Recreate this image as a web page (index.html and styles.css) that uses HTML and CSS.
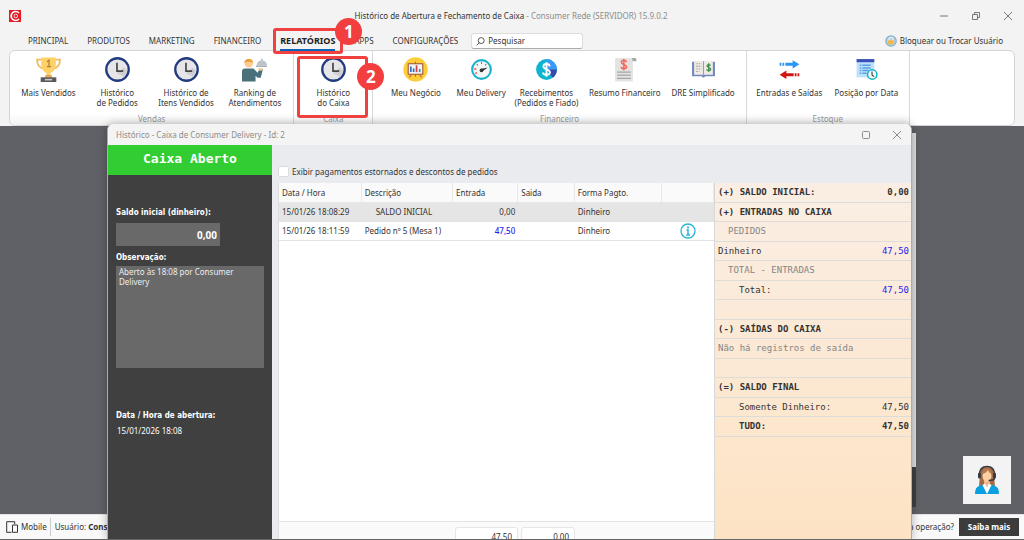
FILE: index.html
```html
<!DOCTYPE html>
<html lang="pt-BR">
<head>
<meta charset="utf-8">
<meta name="viewport" content="width=device-width, initial-scale=1">
<title>Histórico de Abertura e Fechamento de Caixa - Consumer Rede</title>
<link rel="stylesheet" href="styles.css">
</head>
<body>
<svg class="defs" aria-hidden="true">
  <symbol id="clock" viewBox="0 0 24 24">
    <circle cx="12" cy="12" r="10.8" fill="#e6e6e8" stroke="#213a80" stroke-width="2.2"/>
    <path d="M11.5 15.5 18 19a9 9 0 0 0 3-6l-3-3z" fill="#cfcfd3"/>
    <path d="M11.5 5.5v8h6" fill="none" stroke="#444" stroke-width="1.6"/>
  </symbol>
  <symbol id="close" viewBox="0 0 10 10"><path d="M1 1l8 8M9 1L1 9" fill="none" stroke="currentColor"/></symbol>
</svg>
<div class="app">
  <header class="titlebar">
    <svg class="logo" viewBox="0 0 12 12"><rect width="12" height="12" fill="#e31b23"/><path d="M10 3A4.500 4.500 0 1 0 10 9" fill="none" stroke="#fff" stroke-width="1.700"/><circle cx="6.800" cy="6" r="1.800" fill="none" stroke="#fff" stroke-width=".8"/></svg>
    <h1 class="title">Histórico de Abertura e Fechamento de Caixa <span class="muted">- Consumer Rede (SERVIDOR) 15.9.0.2</span></h1>
    <div class="winbtns">
      <button aria-label="Minimizar"><svg viewBox="0 0 10 10"><path d="M1 5h8" stroke="currentColor"/></svg></button>
      <button aria-label="Restaurar"><svg viewBox="0 0 10 10"><path d="M1.500 3.500h5v5h-5zM3.500 3V1.500h5v5H7" fill="none" stroke="currentColor"/></svg></button>
      <button aria-label="Fechar"><svg><use href="#close"/></svg></button>
    </div>
  </header>

  <nav class="menu">
    <a href="#">PRINCIPAL</a>
    <a href="#">PRODUTOS</a>
    <a href="#">MARKETING</a>
    <a href="#">FINANCEIRO</a>
    <a href="#" class="active">RELATÓRIOS<span class="mark mark-tab"><b class="badge">1</b></span></a>
    <a href="#">APPS</a>
    <a href="#">CONFIGURAÇÕES</a>
    <label class="search"><svg viewBox="0 0 10 10"><circle cx="5.800" cy="4" r="3.300" fill="none" stroke="#444"/><path d="M3.500 6.500L.7 9.300" stroke="#444"/></svg><input type="text" placeholder="Pesquisar" aria-label="Pesquisar"></label>
    <button class="lock"><svg viewBox="0 0 12 12"><circle cx="6" cy="6" r="5.800" fill="#7fb0cc"/><circle cx="6" cy="6" r="4.600" fill="#b9d2de"/><path d="M4 6V4.300a2 2 0 0 1 4 0V6" fill="none" stroke="#e8eef0" stroke-width="1.200"/><rect x="3" y="5.200" width="6" height="4.200" rx=".8" fill="#f2b84b"/></svg>Bloquear ou Trocar Usuário</button>
  </nav>

  <section class="ribbon">
    <div class="group">
      <div class="items">
        <button><svg viewBox="0 0 24 24"><path d="M5.500 2.500H1c0 5 2.500 8 6 8.500M18.500 2.500H23c0 5-2.500 8-6 8.500" fill="none" stroke="#f0bd62" stroke-width="1.800"/><path d="M5 .5h14v6c0 5-2 8-5.500 9l1 4h-5l1-4C7 14.500 5 11.500 5 6.500z" fill="#ffd166"/><path d="M10.500 4.500 12.500 3v6M10.500 9.200h4" fill="none" stroke="#b07f40" stroke-width="1.200"/><path d="M9.500 17h5l1.500 3H8z" fill="#e4a950"/><rect x="4.500" y="19.500" width="15" height="4.500" fill="#5a5a5c"/><rect x="8.500" y="21" width="7" height="1.500" fill="#c9c9c9"/></svg>Mais Vendidos</button>
        <button><svg><use href="#clock"/></svg>Histórico<br>de Pedidos</button>
        <button><svg><use href="#clock"/></svg>Histórico de<br>Itens Vendidos</button>
        <button><svg viewBox="0 0 24 24"><path d="M0 23.500V14q0-3 3-3h8l4 4 2-4 3 1-2 8h-3l-2-2v5.500z" fill="#48717c"/><circle cx="6.500" cy="6" r="4" fill="#ffc98f"/><path d="M2.300 6C2 .5 11 .5 10.700 6L9 4.500H4z" fill="#f09a34"/><path d="M14 8a5 5 0 0 1 10 0z" fill="#b9c3c9"/><path d="M13.500 8.800h11" stroke="#8e9aa1" stroke-width="1.200"/><circle cx="19" cy="2.500" r="1" fill="#b9c3c9"/><path d="M16 10.500h3.500v2.500h-3.500z" fill="#ffc98f"/></svg>Ranking de<br>Atendimentos</button>
      </div>
      <span class="caption">Vendas</span>
    </div>
    <div class="group">
      <div class="items">
        <button><svg><use href="#clock"/></svg>Histórico<br>do Caixa</button>
      </div>
      <span class="caption">Caixa</span>
      <span class="mark mark-group"><b class="badge">2</b></span>
    </div>
    <div class="group g-financeiro">
      <div class="items">
        <button><svg viewBox="0 0 24 24"><circle cx="12" cy="12" r="11.700" fill="#ffcc3a"/><path d="M5 6.500h14v10H5z" fill="#eef4fa" stroke="#a0522f" stroke-width="1"/><path d="M12 4.500v2M8 17l-2 2.500M16 17l2 2.500M12 17v2" stroke="#b0622f" stroke-width="1"/><path d="M7.500 9v5.500M10.200 11v3.500" stroke="#2d6fc0" stroke-width="1.600"/><path d="M13 8v6.500" stroke="#d83b3b" stroke-width="1.600"/><path d="M16 11.500v3" stroke="#1ba0b8" stroke-width="1.600"/></svg>Meu Negócio</button>
        <button><svg viewBox="0 0 24 24"><circle cx="12" cy="12" r="9" fill="#f3f5f6" stroke="#16b2cc" stroke-width="2"/><path d="M12 5v1.500M7.500 7l.8 1M16.500 7l-.8 1" stroke="#555"/><path d="M5 11.500h2M6 16l1.500-1" stroke="#ef4d4d" stroke-width="1.300"/><path d="M11 11.500l7-1.500-6 4.500z" fill="#333"/><circle cx="12" cy="12.800" r="1.800" fill="#333"/></svg>Meu Delivery</button>
        <button><svg viewBox="0 0 24 24"><circle cx="12" cy="12" r="10" fill="#0fb5cf"/><path d="M12 12V2a10 10 0 0 1 10 10z" fill="#3e97fb"/><path d="M12 12h10a10 10 0 0 1-4 8z" fill="#3949ab"/><path d="M15 9c0-3.200-6-3.200-6 0s6.300 2.600 6.300 5.800-6.600 3-6.600 0M12 5v14" fill="none" stroke="#fff" stroke-width="1.800"/></svg>Recebimentos<br>(Pedidos e Fiado)</button>
        <button><svg viewBox="0 0 24 24"><path d="M3 1h17v22.500H3z" fill="#e4e3e2"/><path d="M19 1h3q1.500 0 1.500 3H20z" fill="#a6a6a6"/><path d="M13.700 5c0-2.600-4.700-2.600-4.700 0s5 2 5 4.400-5.200 2.500-5.200 0M11.400 1.800v11" fill="none" stroke="#f2695f" stroke-width="1.500"/><path d="M5 14.500h13M5 17.500h13M5 20.500h13" stroke="#a5a5a5" stroke-width="1.200"/></svg>Resumo Financeiro</button>
        <button><svg viewBox="0 0 24 24"><path d="M1 4.500h22v14H14l-2 1.500-2-1.500H1z" fill="#7388bd"/><path d="M3 3.500H11.500v13.500H3zM12.500 3.500h8.500v13.500h-8.500z" fill="#eeebe6"/><path d="M12 4v14" stroke="#a29ba0"/><path d="M5 6.500h5M5 9h5M5 11.500h5M5 14h3" stroke="#b2a39c" stroke-dasharray="1.500 .8"/><path d="M18.700 8.500c0-1.600-3.300-1.600-3.300 0s3.500 1.500 3.500 3.200-3.700 1.800-3.700 0M17 6v8.500" fill="none" stroke="#3c8a49" stroke-width="1.200"/></svg>DRE Simplificado</button>
      </div>
      <span class="caption">Financeiro</span>
    </div>
    <div class="group">
      <div class="items">
        <button><svg viewBox="0 0 24 24"><path d="M8 5.500h7V3l6.500 4-6.500 4V8.500H8z" fill="#2f95f3"/><path d="M2.500 7h5" stroke="#2f95f3" stroke-width="3" stroke-dasharray="1.700 1"/><path d="M16 15.500H9V13l-6.500 4L9 21v-2.500h7z" fill="#d01414"/><path d="M17 17h5" stroke="#d01414" stroke-width="3" stroke-dasharray="1.700 1"/></svg>Entradas e Saídas</button>
        <button><svg viewBox="0 0 24 24"><path d="M2.500 2h17v17.500h-17z" fill="#bde0fb"/><path d="M2.500 2h17v3h-17z" fill="#3a50b4"/><path d="M5.500 8h1.500M5.500 10.500h1.500M5.500 13h1.500M5.500 15.500h1.500M8 8h8M8 10.500h8M8 13h6M8 15.500h4" stroke="#5a9fe0" stroke-width="1.400"/><circle cx="17.500" cy="16.800" r="4.500" fill="#f4f9fa" stroke="#14b4cb" stroke-width="1.500"/><path d="M17.300 14v3.300l2 1.500" fill="none" stroke="#333"/></svg>Posição por Data</button>
      </div>
      <span class="caption">Estoque</span>
    </div>
  </section>

  <main class="workspace">
    <button class="support" aria-label="Suporte"><svg viewBox="0 0 26 30"><path d="M6 9Q6 2 13 2t7 7l1 13H5z" fill="#a56a45"/><path d="M10 15h6v6h-6z" fill="#eeb583"/><ellipse cx="13" cy="11" rx="4.500" ry="6" fill="#fcd0a0"/><path d="M8 9q4-.5 6-4 1 3 4 4-1-6-5-6t-5 6z" fill="#b87950"/><path d="M1 29q0-7 4-8l5-2 3 7 3-7 5 2q4 1 4 8z" fill="#0aa0e0"/><path d="M8.500 20l4.500 9 4.500-9-2.500-1.500L13 22l-2-3.500z" fill="#fff"/><path d="M5.500 10Q5.500 1.500 13 1.500T20.500 10" fill="none" stroke="#3a3a42" stroke-width="1.600"/><rect x="4" y="7.500" width="3" height="6" rx="1.500" fill="#3a3a42"/><rect x="19" y="7.500" width="3" height="6" rx="1.500" fill="#3a3a42"/><path d="M20.500 13q0 2.500-6 2.500" fill="none" stroke="#3a3a42" stroke-width="1.600"/></svg></button>
  </main>

  <footer class="status">
    <svg class="mobile" viewBox="0 0 12 12"><path d="M5.500 11.300H.7V.7h8v2.500M6.500 4h5v7.300h-5z" fill="none" stroke="#333"/></svg>
    <span>Mobile</span>
    <span class="user">Usuário: <b>Consumer</b></span>
    <span class="ask">a operação?</span>
    <button class="more">Saiba mais</button>
  </footer>

  <div class="backwin"><i></i></div>

  <section class="dialog" role="dialog" aria-label="Histórico de caixa">
    <header class="dlg-title">
      <h2>Histórico - Caixa de Consumer Delivery - Id: 2</h2>
      <button aria-label="Maximizar"><svg viewBox="0 0 10 10"><rect x="1.500" y="1.500" width="7" height="7" rx="1" fill="none" stroke="currentColor"/></svg></button>
      <button aria-label="Fechar"><svg><use href="#close"/></svg></button>
    </header>
    <div class="dlg-body">
      <aside class="side">
        <h3>Caixa Aberto</h3>
        <div class="fields">
          <label for="saldo">Saldo inicial (dinheiro):</label>
          <input id="saldo" type="text" value="0,00" readonly>
          <label for="obs">Observação:</label>
          <textarea id="obs" readonly>Aberto às 18:08 por Consumer Delivery</textarea>
          <strong>Data / Hora de abertura:</strong>
          <span class="when">15/01/2026 18:08</span>
        </div>
      </aside>
      <div class="content">
        <label class="check"><input type="checkbox">Exibir pagamentos estornados e descontos de pedidos</label>
        <div class="panes">
          <div class="grid">
            <table>
              <colgroup><col class="c1"><col class="c2"><col class="c3"><col class="c4"><col class="c5"><col class="c6"></colgroup>
              <thead><tr><th>Data / Hora</th><th>Descrição</th><th>Entrada</th><th>Saida</th><th>Forma Pagto.</th><th></th></tr></thead>
              <tbody>
                <tr class="sel"><td>15/01/26 18:08:29</td><td class="ind">SALDO INICIAL</td><td class="num">0,00</td><td></td><td>Dinheiro</td><td></td></tr>
                <tr><td>15/01/26 18:11:59</td><td>Pedido nº 5 (Mesa 1)</td><td class="num blue">47,50</td><td></td><td>Dinheiro</td><td class="act"><button aria-label="Informações"><svg viewBox="0 0 16 16"><circle cx="8" cy="8" r="7" fill="#fff" stroke="#27b3d6" stroke-width="1.300"/><circle cx="8" cy="4.500" r="1.100" fill="#27b3d6"/><path d="M6.500 7H8v5M6.300 12h3.600" fill="none" stroke="#27b3d6" stroke-width="1.500"/></svg></button></td></tr>
              </tbody>
            </table>
            <div class="totals"><output>47,50</output><output>0,00</output></div>
          </div>
          <div class="summary">
            <table>
              <tr class="b"><td>(+) SALDO INICIAL:</td><td>0,00</td></tr>
              <tr class="b"><td>(+) ENTRADAS NO CAIXA</td><td></td></tr>
              <tr class="g"><td class="i1">PEDIDOS</td><td></td></tr>
              <tr><td>Dinheiro</td><td class="blue">47,50</td></tr>
              <tr class="g"><td class="i1">TOTAL - ENTRADAS</td><td></td></tr>
              <tr><td class="i2">Total:</td><td class="blue">47,50</td></tr>
              <tr><td></td><td></td></tr>
              <tr class="b"><td>(-) SAÍDAS DO CAIXA</td><td></td></tr>
              <tr class="g"><td>Não há registros de saída</td><td></td></tr>
              <tr><td></td><td></td></tr>
              <tr class="b"><td>(=) SALDO FINAL</td><td></td></tr>
              <tr><td class="i2">Somente Dinheiro:</td><td>47,50</td></tr>
              <tr class="b"><td class="i2">TUDO:</td><td>47,50</td></tr>
            </table>
          </div>
        </div>
      </div>
    </div>
  </section>
</div>
</body>
</html>
```
FILE: styles.css
```css
* { box-sizing: border-box; }
body { margin: 0; font: 8px/10px "Noto Sans", "Open Sans", sans-serif; color: #333; }
button, input, textarea { font: inherit; color: inherit; margin: 0; padding: 0; border: 0; background: none; }
a { color: inherit; text-decoration: none; }
h1, h2, h3 { margin: 0; font-size: inherit; font-weight: 400; }
svg { display: block; }
.defs { position: absolute; width: 0; height: 0; }

.app { position: relative; display: flex; flex-direction: column; height: 100vh; overflow: hidden; background: #f3f3f3; border-bottom: 1px solid #666; }

.titlebar { display: grid; grid-template-columns: 1fr auto 1fr; align-items: center; height: 32px; padding: 0 11px 0 9px; flex: none; }
.logo { width: 12px; height: 12px; }
.muted { color: #8c8c8c; }
.winbtns { display: flex; justify-content: flex-end; gap: 22px; color: #777; }
.winbtns svg, .dlg-title svg { width: 10px; height: 10px; }

.menu { display: flex; align-items: center; height: 18px; padding: 0 21px 0 28px; gap: 19px; flex: none; white-space: nowrap; }
.menu .active { position: relative; font-weight: 700; font-size: 9px; color: #222; box-shadow: 0 3px #f3f3f3, 0 5px #0c62b8; }
.search { display: flex; align-items: center; gap: 3px; width: 112px; height: 16px; margin-left: -6px; padding: 0 4px; background: #fff; border: 1px solid #ddd; border-bottom-color: #aaa; border-radius: 3px; }
.search svg { width: 9px; height: 9px; flex: none; }
.search input { width: 100%; outline: 0; }
.search input::placeholder { color: #333; opacity: 1; }
.lock { display: flex; align-items: center; gap: 3px; margin-left: auto; }
.lock svg { width: 12px; height: 12px; }

.mark { position: absolute; z-index: 3; border: 3px solid #f04141; border-radius: 3px; pointer-events: none; }
.mark-tab { inset: -8px -8px -8px -7px; }
.mark-group { inset: 5px 4px 7px 3px; }
.badge { position: absolute; display: grid; place-items: center; width: 27px; height: 27px; border-radius: 50%; background: #f23e3e; color: #fff; font: 700 17px/20px "Noto Sans", sans-serif; }
.mark-tab .badge { right: -22px; top: -13px; }
.mark-group .badge { right: -19px; top: 4px; }

.ribbon { display: grid; grid-template-columns: 284fr 79fr 373fr 163fr 104fr; height: 76px; margin: 0 9px; background: #fff; border: 1px solid #d4d4d4; border-radius: 6px; flex: none; }
.group { position: relative; display: flex; flex-direction: column; justify-content: space-between; border-right: 1px solid #d8d8d8; padding: 6px 4px 1px; min-width: 0; background: linear-gradient(#fff 85%, #f2f2f2); }
.group:first-child { border-radius: 6px 0 0 6px; }
.g-financeiro { padding: 6px 10px 1px; }
.items { display: flex; }
.items button { flex: 65 1 0; min-width: 0; display: flex; flex-direction: column; align-items: center; white-space: nowrap; }
.g-financeiro button:nth-child(4) { flex-grow: 91; }
.items svg { width: 25px; height: 25px; margin-bottom: 6px; }
.caption { text-align: center; color: #999; }

.workspace { flex: 1; display: flex; align-items: flex-end; justify-content: flex-end; padding: 0 13px 10px; background: #606166; min-height: 0; }
.support { display: grid; place-items: center; width: 48px; height: 48px; background: #f3f3f3; }
.support svg { width: 26px; height: 30px; }

.status { display: flex; align-items: center; height: 25px; padding: 0 5px 0 6px; background: #f9f9f9; border-top: 1px solid #e4e4e4; flex: none; }
.mobile { width: 12px; height: 12px; margin-right: 3px; }
.user { margin-left: 3px; padding: 4px 0 4px 4px; border-left: 1px solid #ccc; }
.ask { margin-left: auto; }
.more { margin-left: 5px; width: 60px; height: 18px; background: #3c3c3c; color: #fff; font-weight: 700; }

.backwin { position: absolute; left: 107px; right: 108px; top: 133px; bottom: 32px; display: flex; align-items: flex-end; background: #dcdfe0; }
.backwin i { width: 100%; height: 40px; background: #404040; }

.dialog { position: absolute; left: 107px; right: 112px; top: 124px; bottom: 0; display: flex; flex-direction: column; background: #eaebef; border: 1px solid #aaacad; border-width: 0 1px; border-radius: 6px 6px 0 0; overflow: hidden; box-shadow: 0 0 10px rgba(0,0,0,.3); }
.dlg-title { display: flex; align-items: center; gap: 21px; height: 21px; padding: 0 9px 0 8px; background: #f4f4f4; color: #8c8c8c; flex: none; }
.dlg-title h2 { flex: 1; }
.dlg-body { flex: 1; display: flex; min-height: 0; }
.side { width: 164px; flex: none; background: #404040; color: #fff; }
.side h3 { height: 30px; padding-top: 6px; background: #32cd32; text-align: center; font: 700 13px/16px "DejaVu Sans Mono", monospace; }
.fields { display: flex; flex-direction: column; align-items: flex-start; padding: 33px 8px 0; }
.fields label, .fields strong { font: 700 8px/10px "DejaVu Sans Condensed", "DejaVu Sans", sans-serif; }
.fields input { width: 104px; height: 23px; margin: 5px 0 7px; padding: 0 3px; background: #696969; text-align: right; font-size: 10px; font-weight: 700; }
.fields textarea { align-self: stretch; height: 102px; margin: 3px 0 43px; padding: 1px 3px; background: #696969; border: 0; resize: none; overflow: hidden; color: #eee; }
.when { margin: 5px 1px; }

.content { flex: 1; min-width: 0; display: flex; flex-direction: column; padding: 21px 0 0 6px; }
.check { display: flex; align-items: center; gap: 3px; height: 11px; margin-bottom: 6px; }
.check input { appearance: none; width: 11px; height: 11px; background: #fff; border: 1px solid #dcdcdc; border-radius: 2px; }
.panes { flex: 1; display: flex; min-height: 0; }
.grid { flex: 1; min-width: 0; display: flex; flex-direction: column; justify-content: space-between; background: #fff; border-left: 1px solid #ddd; }
table { width: 100%; border-collapse: separate; border-spacing: 0; table-layout: fixed; }
.c1 { width: 19%; } .c2 { width: 21%; } .c3 { width: 15%; } .c4 { width: 13%; } .c5 { width: 20%; } .c6 { width: 12%; }
th { height: 20px; padding: 0 3px; text-align: left; font-weight: 400; background: #fafafa; border-right: 1px solid #e8e8e8; border-bottom: 1px solid #e8e8e8; }
td { height: 19px; padding: 0 3px; white-space: nowrap; }
.grid td { border-bottom: 1px solid #e4e4e4; }
.sel td { background: #e5e5e5; }
.grid .ind { padding-left: 14px; }
.num { text-align: right; }
.act { text-align: center; }
.act button, .act svg { width: 16px; height: 16px; }
.act button { display: inline-block; vertical-align: middle; }
.blue { color: #2b22ee; }
.num.blue { font-weight: 500; }
.totals { display: flex; gap: 3px; height: 18px; padding: 5px 0 0 176px; background: #fafafa; border-top: 1px solid #e4e4e4; overflow: hidden; }
.totals output { width: 63px; height: 20px; padding: 4px 5px; text-align: right; background: #fff; border: 1px solid #e6e6e6; border-radius: 3px; }
.totals output + output { width: 54px; }

.summary { width: 197px; flex: none; border-left: 1px solid #d8d8d8; background: linear-gradient(#faeee4, #fde3c4); font: 9px/11px "DejaVu Sans Mono", monospace; }
.summary td { border-bottom: 1px solid #dcdcd8; }
.summary tr:nth-child(odd) td { height: 20px; }
.summary td:first-child { width: 150px; }
.summary td:last-child { text-align: right; padding-right: 2px; }
.summary .i1 { padding-left: 13px; }
.summary .i2 { padding-left: 24px; }
.b { font-weight: 700; }
.g { color: #858585; }
```
